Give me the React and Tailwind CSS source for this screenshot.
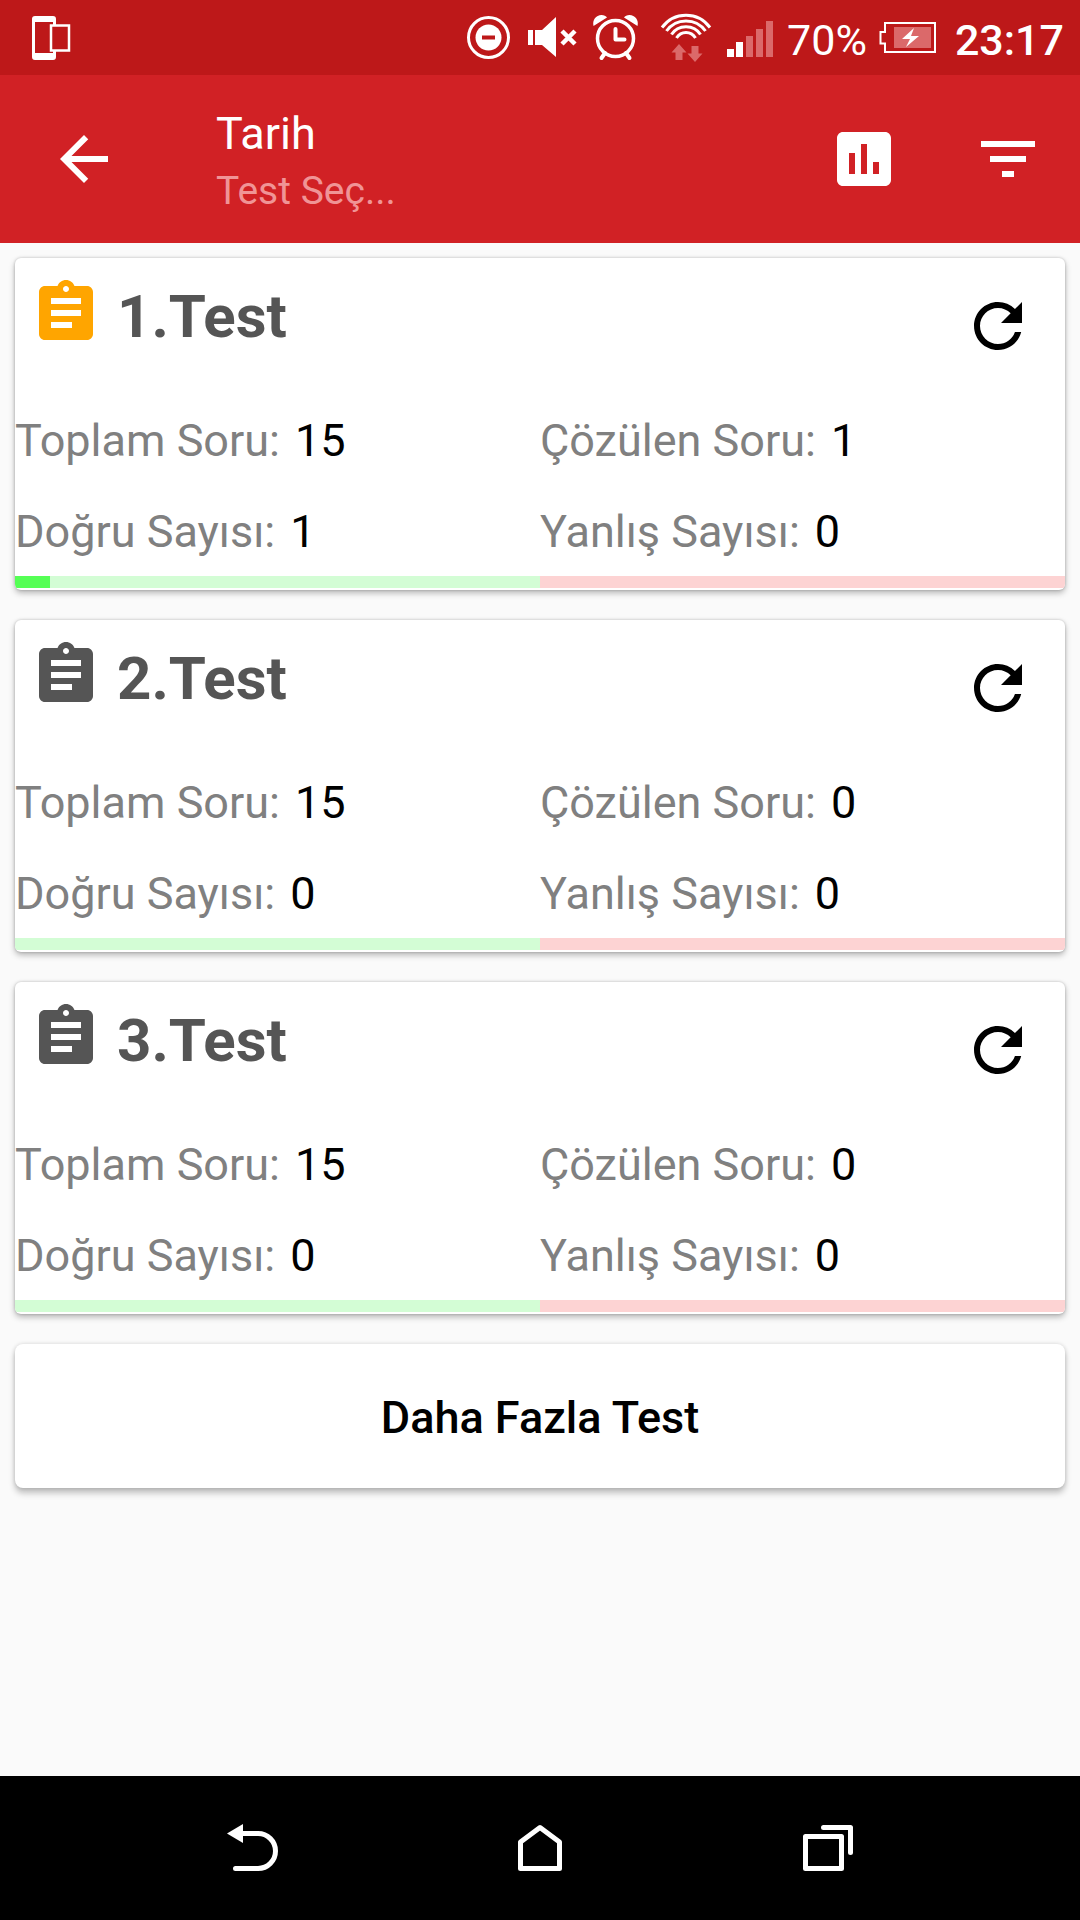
import { MdArrowBack, MdAssessment, MdAssignment, MdFilterList, MdRefresh } from "react-icons/md";

const tests = [
  { id: 1, total: 15, solved: 1, correct: 1, wrong: 0 },
  { id: 2, total: 15, solved: 0, correct: 0, wrong: 0 },
  { id: 3, total: 15, solved: 0, correct: 0, wrong: 0 },
];

function StatusBar() {
  return (
    <div className="flex h-[75px] items-center gap-3 bg-[#bd1819] pr-4 pl-[30px] text-white">
      <svg className="h-[75px] w-[42px]" viewBox="0 0 42 75" fill="none" aria-hidden="true">
        <path
          fill="#fff"
          fillRule="evenodd"
          d="M5 16h18a3 3 0 0 1 3 3v38a3 3 0 0 1-3 3H5a3 3 0 0 1-3-3V19a3 3 0 0 1 3-3zM5 22v31h18V22z"
        />
        <rect x="21" y="25.500" width="18" height="25" fill="#bd1819" stroke="#fff" strokeWidth="2.500" />
      </svg>

      <svg className="ml-auto h-[75px] w-12" viewBox="0 0 48 75" aria-hidden="true">
        <circle cx="23.500" cy="37.500" r="20" fill="none" stroke="#fff" strokeWidth="3" />
        <circle cx="23.500" cy="37.500" r="13" fill="#fff" />
        <rect x="17" y="35.500" width="13" height="4" fill="#bd1819" />
      </svg>

      <svg className="h-[75px] w-[54px]" viewBox="0 0 54 75" fill="#fff" aria-hidden="true">
        <rect x="3" y="30" width="5" height="15" />
        <path d="M10 30h7l14-13v40L17 45h-7z" />
        <path d="M37 31l13 13M50 31L37 44" stroke="#fff" strokeWidth="4.500" />
      </svg>

      <svg className="h-[75px] w-[52px]" viewBox="0 0 52 75" fill="none" stroke="#fff" aria-hidden="true">
        <circle cx="24.500" cy="38.500" r="18" strokeWidth="3.500" />
        <path d="M24.500 29v10.500h9" strokeWidth="4" strokeLinecap="round" strokeLinejoin="round" />
        <path d="M14 53l-3.500 5M35 53l3.500 5" strokeWidth="4" strokeLinecap="round" />
        <path
          d="M2.500 26C1 20 5 15 10.500 15c2.500 0 4.500 1 5.500 2.500zM46.500 26c1.500-6-2.500-11-8-11-2.500 0-4.500 1-5.500 2.500z"
          fill="#fff"
          stroke="none"
        />
      </svg>

      <svg className="h-[75px] w-[60px]" viewBox="0 0 60 75" fill="none" stroke="#fff" strokeWidth="3" aria-hidden="true">
        <path d="M7 27.500C19 11 43 11 55 27.500" />
        <path d="M11.500 31C21 17.500 41 17.500 50.500 31" />
        <path d="M16.500 34.500C23 24 39 24 45.500 34.500" />
        <path d="M21.500 38C26 30.500 36 30.500 40.500 38" />
        <path
          d="M24 44l-7.500 8.500h4V60h7v-7.500h4zM36.500 46v7.500h-4L40 62l7.500-8.500h-4V46z"
          fill="#db696a"
          stroke="none"
        />
      </svg>

      <svg className="h-[75px] w-12" viewBox="0 0 48 75" fill="#fff" aria-hidden="true">
        <path d="M0 49h7v8H0zM9 42h7v15H9z" />
        <path d="M19 36h7v21h-7zM29 29h7v28h-7zM39 21h7v36h-7z" fill="#db696a" />
      </svg>

      <span className="pt-1 text-[43px] leading-[50px]">70%</span>

      <svg className="h-[75px] w-16" viewBox="0 0 64 75" aria-hidden="true">
        <path d="M6 23h50v29H6v-8.500H1.500V32H6z" fill="none" stroke="#fff" strokeWidth="2" />
        <rect x="15" y="27" width="37" height="21" fill="#db696a" />
        <path d="M35 28L23 39h8l-4 8 13-11h-8z" fill="#fff" />
      </svg>

      <span className="pt-1 text-[43px] leading-[50px] font-medium">23:17</span>
    </div>
  );
}

function AppBar() {
  return (
    <header className="flex h-[168px] items-stretch bg-[#d12125] text-white">
      <button type="button" aria-label="Geri" className="flex w-[168px] items-center justify-center">
        <MdArrowBack className="size-[72px]" />
      </button>
      <div className="flex flex-1 flex-col gap-2 pt-8 pl-12">
        <h1 className="text-[45px] leading-[53px]">Tarih</h1>
        <p className="text-[39px] leading-[46px] text-[#f09496]">Test Seç...</p>
      </div>
      <button type="button" aria-label="İstatistikler" className="flex w-36 items-center justify-center">
        <MdAssessment className="size-[72px]" />
      </button>
      <button type="button" aria-label="Filtrele" className="flex w-36 items-center justify-center">
        <MdFilterList className="size-[72px]" />
      </button>
    </header>
  );
}

function Stat({ label, value }) {
  return (
    <div className="flex gap-[15px]">
      <dt className="text-[#808080]">{label}</dt>
      <dd className="text-black">{value}</dd>
    </div>
  );
}

function Bar({ label, value, total, track, fill }) {
  return (
    <div
      role="progressbar"
      aria-label={label}
      aria-valuenow={value}
      aria-valuemin={0}
      aria-valuemax={total}
      className={`h-3 flex-1 ${track}`}
    >
      <div className={`h-full ${fill}`} style={{ width: `${(value / total) * 100}%` }} />
    </div>
  );
}

function TestCard({ test }) {
  return (
    <article className="overflow-hidden rounded-md bg-white pb-0.5 shadow-[0_3px_6px_rgba(0,0,0,0.28),0_0_3px_rgba(0,0,0,0.2)]">
      <div className="flex items-start gap-[15px] pt-[19px] pr-[31px] pl-[15px]">
        <MdAssignment
          className={`size-[72px] shrink-0 ${test.solved > 0 ? "text-[#ffa500]" : "text-[#555555]"}`}
        />
        <h2 className="flex-1 pt-[5px] text-[60px] leading-[70px] font-bold text-[#555555]">{test.id}.Test</h2>
        <button type="button" aria-label={`${test.id}. testi sıfırla`} className="mt-[13px] text-black">
          <MdRefresh className="size-[72px]" />
        </button>
      </div>
      <dl className="mt-[52px] mb-[18px] grid grid-cols-2 gap-y-[38px] text-[45px] leading-[53px]">
        <Stat label="Toplam Soru:" value={test.total} />
        <Stat label="Çözülen Soru:" value={test.solved} />
        <Stat label="Doğru Sayısı:" value={test.correct} />
        <Stat label="Yanlış Sayısı:" value={test.wrong} />
      </dl>
      <div className="flex">
        <Bar label="Doğru" value={test.correct} total={test.total} track="bg-[#d3fdd5]" fill="bg-[#55ff55]" />
        <Bar label="Yanlış" value={test.wrong} total={test.total} track="bg-[#fdd3d3]" fill="bg-[#ff5555]" />
      </div>
    </article>
  );
}

function NavBar() {
  const button = "flex items-center justify-center";
  const icon = {
    className: "size-[72px]",
    viewBox: "0 0 72 72",
    fill: "none",
    stroke: "#fff",
    strokeWidth: 5,
    strokeLinecap: "round",
    strokeLinejoin: "round",
    "aria-hidden": true,
  };
  return (
    <nav className="grid h-36 grid-cols-3 bg-black px-[10%]">
      <button type="button" aria-label="Geri" className={button}>
        <svg {...icon}>
          <path d="M27 21.500h15a17.500 17.500 0 0 1 0 35H19.500" />
          <path d="M11 21.500L27 12v19z" fill="#fff" stroke="none" />
        </svg>
      </button>
      <button type="button" aria-label="Ana ekran" className={button}>
        <svg {...icon}>
          <path d="M36 15.500l19.500 14.500v26.500h-39V30z" />
        </svg>
      </button>
      <button type="button" aria-label="Son uygulamalar" className={button}>
        <svg {...icon}>
          <path d="M13.500 24.500h36v32h-36zM31.500 15.500h27v25" />
        </svg>
      </button>
    </nav>
  );
}

export default function App() {
  return (
    <div className="flex min-h-screen flex-col bg-[#fafafa] font-[Roboto,sans-serif]">
      <StatusBar />
      <AppBar />
      <main className="flex flex-1 flex-col gap-[30px] p-[15px]">
        {tests.map((test) => (
          <TestCard key={test.id} test={test} />
        ))}
        <button
          type="button"
          className="h-36 rounded-lg bg-white pt-0.5 text-[45px] leading-[53px] font-medium text-black shadow-[0_5px_6px_rgba(0,0,0,0.24),0_0_4px_rgba(0,0,0,0.14)]"
        >
          Daha Fazla Test
        </button>
      </main>
      <NavBar />
    </div>
  );
}
